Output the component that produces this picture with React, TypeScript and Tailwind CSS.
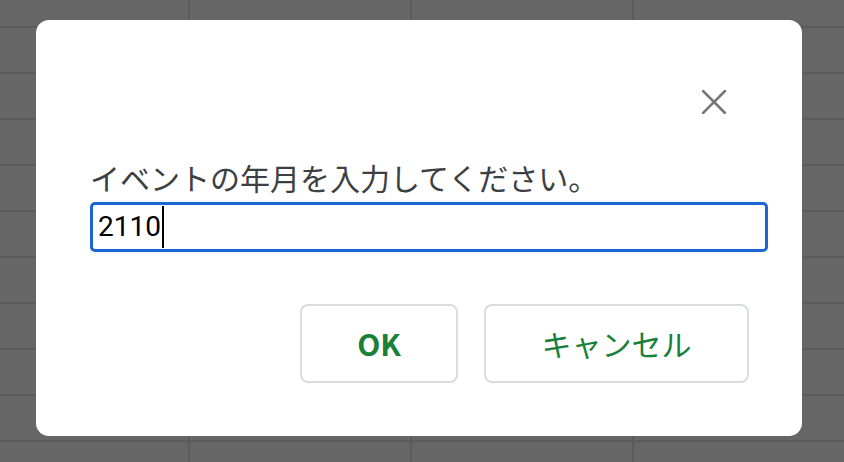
import React from "react";

const cjk = "font-['Noto_Sans_CJK_JP','Noto_Sans',sans-serif]";

const App = () => {
  const rows = Array.from({ length: 11 });
  const cols = Array.from({ length: 4 });

  return (
    <div className="relative w-[844px] h-[462px] overflow-hidden bg-[#666666]">
      {/* Sheet grid behind the overlay */}
      <div className="grid grid-cols-[190px_222px_222px_222px] grid-rows-[28px_repeat(10,46px)]">
        {rows.map((_, r) =>
          cols.map((_, c) => (
            <div key={`${r}-${c}`} className="border-r-2 border-b-2 border-[#5b5b5b]" />
          ))
        )}
      </div>

      {/* Dialog */}
      <div className="absolute left-[36px] top-[20px] w-[766px] h-[416px] bg-white rounded-[13px] flex flex-col pl-[54px] pr-[34px]">
        {/* Close */}
        <div className="flex justify-end pt-[70px] pr-[42px]">
          <svg width="24" height="24" viewBox="0 0 24 24" className="text-[#757575]">
            <path d="M1 1L23 23M23 1L1 23" stroke="currentColor" strokeWidth="2.6" strokeLinecap="square" />
          </svg>
        </div>

        {/* Prompt */}
        <p className={`${cjk} mt-[45px] text-[30px] leading-[36px] text-[#3c4043]`}>
          イベントの年月を入力してください。
        </p>

        {/* Input */}
        <div className="mt-[7px] h-[50px] border-[3px] border-[#1967d2] rounded-[5px] flex items-center px-[5px]">
          <span className="font-['Roboto',sans-serif] text-[28px] text-black leading-none">2110</span>
          <span className="w-[2px] h-[42px] bg-black ml-[1px]" />
        </div>

        {/* Actions */}
        <div className="flex justify-end gap-[26px] mt-[52px] pr-[19px]">
          <button className={`${cjk} w-[158px] h-[79px] border-2 border-[#dadce0] rounded-[8px] text-[#188038] text-[30px] font-bold`}>
            OK
          </button>
          <button className={`${cjk} w-[265px] h-[79px] border-2 border-[#dadce0] rounded-[8px] text-[#188038] text-[30px] font-normal`}>
            キャンセル
          </button>
        </div>
      </div>
    </div>
  );
};

export default App;
